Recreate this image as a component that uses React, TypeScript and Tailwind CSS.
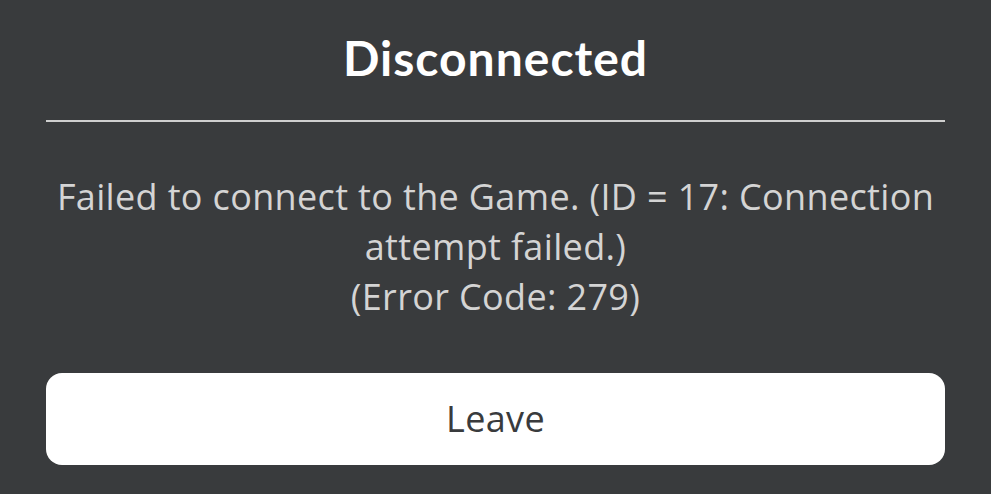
export default function App() {
  return (
    <div
      className="flex h-[494px] w-[991px] flex-col bg-[#393b3d] px-[46px]"
      style={{ fontFamily: "'Open Sans', Lato, sans-serif" }}
    >
      <h1 className="pt-[26px] text-center font-['Lato',sans-serif] text-[48px] font-bold leading-[64px] tracking-[1px] text-white">
        Disconnected
      </h1>
      <div className="mt-[30px] h-[2px] bg-[#cfcfcf]" />
      <p className="mt-[50px] text-center text-[36px] leading-[50px] tracking-[0.35px] text-[#d4d4d4]">
        Failed to connect to the Game. (ID = 17: Connection attempt failed.)
        <br />
        (Error Code: 279)
      </p>
      <button className="mt-[51px] h-[92px] rounded-[16px] bg-white text-[36px] tracking-[0.35px] text-[#393b3d]">
        Leave
      </button>
    </div>
  );
}
